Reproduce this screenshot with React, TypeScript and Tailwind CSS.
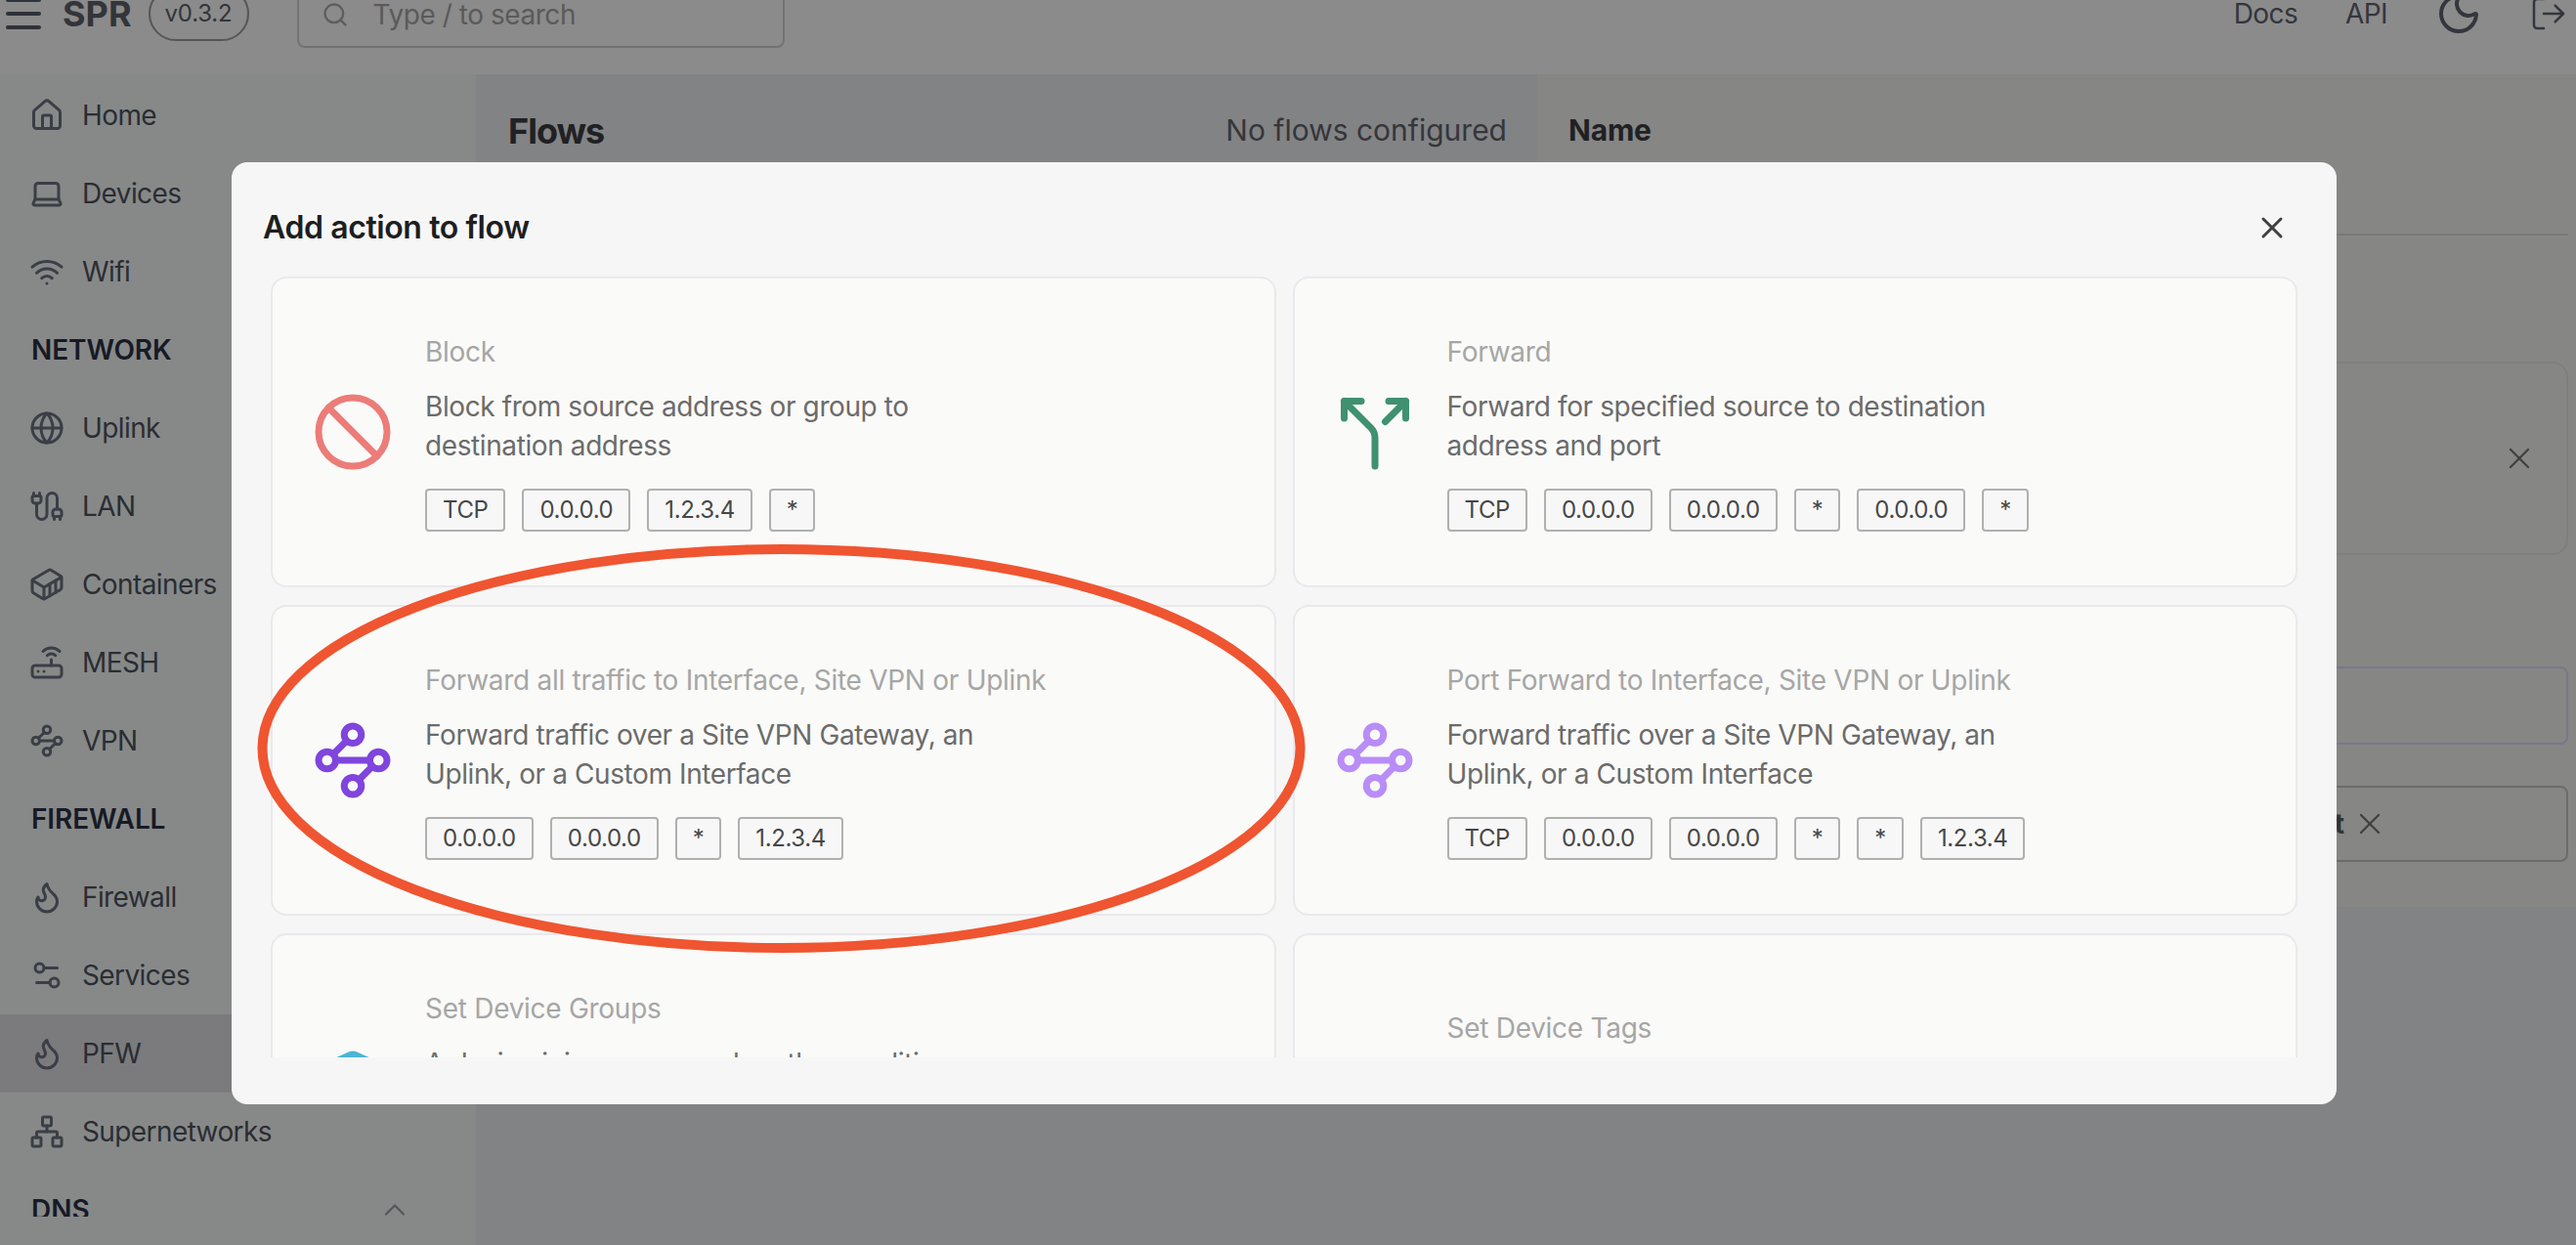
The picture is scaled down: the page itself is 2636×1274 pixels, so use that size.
import React from "react";
import {
  Ban, Cable, ChevronUp, Container, Flame, Globe, House, Laptop, Layers, LogOut, Menu, Moon, Network,
  Router, Search, Settings2, Split, Waypoints, Wifi, X,
} from "lucide-react";

const NAV_TOP = [
  { label: "Home", icon: House },
  { label: "Devices", icon: Laptop },
  { label: "Wifi", icon: Wifi },
];

const NAV_NETWORK = [
  { label: "Uplink", icon: Globe },
  { label: "LAN", icon: Cable },
  { label: "Containers", icon: Container },
  { label: "MESH", icon: Router },
  { label: "VPN", icon: Waypoints },
];

const NAV_FIREWALL = [
  { label: "Firewall", icon: Flame },
  { label: "Services", icon: Settings2 },
  { label: "PFW", icon: Flame, active: true },
  { label: "Supernetworks", icon: Network },
];

const ACTIONS = [
  {
    title: "Block",
    desc: "Block from source address or group to destination address",
    icon: Ban,
    color: "text-[#ec7c78]",
    chips: ["TCP", "0.0.0.0", "1.2.3.4", "*"],
  },
  {
    title: "Forward",
    desc: "Forward for specified source to destination address and port",
    icon: Split,
    color: "text-[#3f9170]",
    chips: ["TCP", "0.0.0.0", "0.0.0.0", "*", "0.0.0.0", "*"],
  },
  {
    title: "Forward all traffic to Interface, Site VPN or Uplink",
    desc: "Forward traffic over a Site VPN Gateway, an Uplink, or a Custom Interface",
    icon: Waypoints,
    color: "text-[#7f45dd]",
    chips: ["0.0.0.0", "0.0.0.0", "*", "1.2.3.4"],
  },
  {
    title: "Port Forward to Interface, Site VPN or Uplink",
    desc: "Forward traffic over a Site VPN Gateway, an Uplink, or a Custom Interface",
    icon: Waypoints,
    color: "text-[#b88df7]",
    chips: ["TCP", "0.0.0.0", "0.0.0.0", "*", "*", "1.2.3.4"],
  },
  {
    title: "Set Device Groups",
    desc: "A device joins a group when the conditions are met for the device",
    icon: Layers,
    color: "text-[#4ab5d4]",
    chips: ["*"],
  },
  {
    title: "Set Device Tags",
    desc: "",
    icon: null,
    color: "",
    chips: [],
  },
];

function NavRow({ label, icon: Icon, active }: { label: string; icon: React.ElementType; active?: boolean }) {
  return (
    <div className={`flex items-center gap-[18px] h-[80px] pl-[30px] shrink-0 ${active ? "bg-[#7b7b7d]" : ""}`}>
      <Icon size={36} strokeWidth={2} className="text-[#3a3e46] shrink-0" />
      <span className="text-[28px] tracking-[-0.6px] text-[#2a2d33]">{label}</span>
    </div>
  );
}

function SectionTitle({ label }: { label: string }) {
  return (
    <div className="flex items-center h-[80px] pl-[32px] shrink-0 text-[28px] font-semibold tracking-[-0.1px] text-[#171a26]">
      {label}
    </div>
  );
}

function ActionCard({ action }: { action: (typeof ACTIONS)[number] }) {
  const Icon = action.icon;
  return (
    <div className="flex items-center gap-[32px] h-[318px] px-[40px] rounded-[16px] border-2 border-[#e9e9ed] bg-[#fafaf8]">
      {Icon ? (
        <Icon size={84} strokeWidth={2} className={`${action.color} shrink-0`} />
      ) : (
        <div className="w-[84px] shrink-0" />
      )}
      <div className="flex flex-col">
        <div className={`text-[28px] leading-[40px] tracking-[-0.28px] text-[#a6a6a6] ${action.desc ? "" : "mb-[124px]"}`}>
          {action.title}
        </div>
        {action.desc && (
          <div className="mt-[16px] max-w-[600px] text-[28px] leading-[40px] tracking-[-0.4px] text-[#6b6b6b]">
            {action.desc}
          </div>
        )}
        {action.chips.length > 0 && (
          <div className="flex gap-[17px] mt-[24px]">
            {action.chips.map((chip, i) => (
              <span
                key={i}
                className="flex items-center h-[44px] px-[16px] rounded-[4px] border-2 border-[#b0b0b0] bg-[#f7f7f7] text-[24px] leading-[32px] tracking-[-0.4px] text-[#474747]"
              >
                {chip}
              </span>
            ))}
          </div>
        )}
      </div>
    </div>
  );
}

export default function App() {
  return (
    <div className="relative h-screen w-full overflow-hidden bg-[#828385] font-['Inter',sans-serif]">
      {/* Top bar, page is scrolled a bit so it is cut at the top */}
      <header className="flex items-start h-[76px] bg-[#8b8b8b]">
        <div className="flex items-center h-[28px] w-full">
          <Menu size={48} strokeWidth={2} className="text-[#2f3238] shrink-0" />
          <span className="ml-[16px] text-[36px] font-bold text-[#33353a]">SPR</span>
          <span className="flex items-center justify-center ml-[17px] w-[103px] h-[56px] shrink-0 rounded-[28px] border-2 border-[#55565a] text-[24px] tracking-[-0.2px] text-[#33353a]">
            v0.3.2
          </span>
          <div className="flex items-center gap-[25px] ml-[49px] w-[499px] h-[72px] mt-[-2px] pt-[3px] pl-[23px] rounded-[8px] border-2 border-[#727272] shrink-0">
            <Search size={28} strokeWidth={2} className="text-[#5d5d5d] shrink-0" />
            <span className="text-[28px] tracking-[-0.45px] text-[#5a5a5a]">Type / to search</span>
          </div>
          <div className="flex-1" />
          <span className="text-[28px] tracking-[-0.6px] text-[#33363d]">Docs</span>
          <span className="ml-[49px] text-[28px] tracking-[-0.6px] text-[#33363d]">API</span>
          <Moon size={48} strokeWidth={2} className="ml-[49px] text-[#33363d] shrink-0" />
          <LogOut size={40} strokeWidth={1.5} className="ml-[48px] mr-[8px] text-[#33363d] shrink-0" />
        </div>
      </header>

      <div className="flex h-[1198px]">
        {/* Sidebar */}
        <aside className="flex flex-col w-[487px] h-[1198px] shrink-0 bg-[#878988]">
          <div className="flex flex-col h-[1169px] pt-[2px] overflow-hidden">
            {NAV_TOP.map((item) => <NavRow key={item.label} {...item} />)}
            <SectionTitle label="NETWORK" />
            {NAV_NETWORK.map((item) => <NavRow key={item.label} {...item} />)}
            <SectionTitle label="FIREWALL" />
            {NAV_FIREWALL.map((item) => <NavRow key={item.label} {...item} />)}
            <div className="flex items-center justify-between h-[80px] pl-[32px] pr-[65px] shrink-0">
              <span className="text-[28px] font-semibold text-[#171a26]">DNS</span>
              <ChevronUp size={36} strokeWidth={1.5} className="text-[#55565a]" />
            </div>
          </div>
        </aside>

        {/* Flows list */}
        <section className="flex items-start justify-between w-[1086px] h-[116px] pl-[33px] pr-[31px] shrink-0">
          <span className="mt-[36px] text-[36px] leading-[44px] font-bold tracking-[-1px] text-[#202124]">Flows</span>
          <span className="mt-[36px] text-[30px] leading-[42px] text-[#35363a]">No flows configured</span>
        </section>

        {/* Flow editor, mostly behind the dialog */}
        <section className="flex flex-col flex-1 h-[852px] pl-[32px] pr-[8px] bg-[#868684]">
          <div className="flex items-center h-[114px] text-[30px] font-bold tracking-[-0.2px] text-[#202124]">Name</div>
          <div className="h-[2px] mt-[49px] bg-[#797979]" />
          <div className="flex items-center justify-end h-[198px] mt-[129px] pr-[30px] rounded-[16px] border-2 border-[#7f7f82]">
            <X size={36} strokeWidth={1.5} className="text-[#404040]" />
          </div>
          <div className="h-[80px] mt-[114px] rounded-[8px] border-2 border-[#77788a]" />
          <div className="flex items-center justify-end gap-[8px] h-[78px] mt-[42px] pr-[183px] rounded-[8px] border-2 border-[#6b6b6b]">
            <span className="text-[28px] font-bold text-[#333333]">t</span>
            <X size={36} strokeWidth={1.5} className="text-[#404040]" />
          </div>
        </section>
      </div>

      {/* Dialog */}
      <div className="absolute left-[237px] top-[166px] w-[2154px] h-[964px] rounded-[16px] bg-[#f6f6f7] overflow-hidden">
        <div className="flex items-center justify-between h-[117px] pt-[17px] pl-[32px] pr-[48px]">
          <span className="text-[32px] font-semibold tracking-[-0.4px] text-[#1e1e1e]">Add action to flow</span>
          <X size={36} strokeWidth={2} className="text-[#404040]" />
        </div>
        <div className="h-[799px] px-[40px] overflow-hidden">
          <div className="grid grid-cols-2 gap-x-[17px] gap-y-[18px]">
            {ACTIONS.map((action) => <ActionCard key={action.title} action={action} />)}
          </div>
        </div>
      </div>

      {/* Red marker circle on top of the screenshot */}
      <svg className="absolute left-[260px] top-[552px] pointer-events-none" width="1080" height="430" viewBox="0 0 1080 430">
        <ellipse cx="539.5" cy="214" rx="531" ry="204" fill="none" stroke="#ef5530" strokeWidth="10" />
      </svg>
    </div>
  );
}
